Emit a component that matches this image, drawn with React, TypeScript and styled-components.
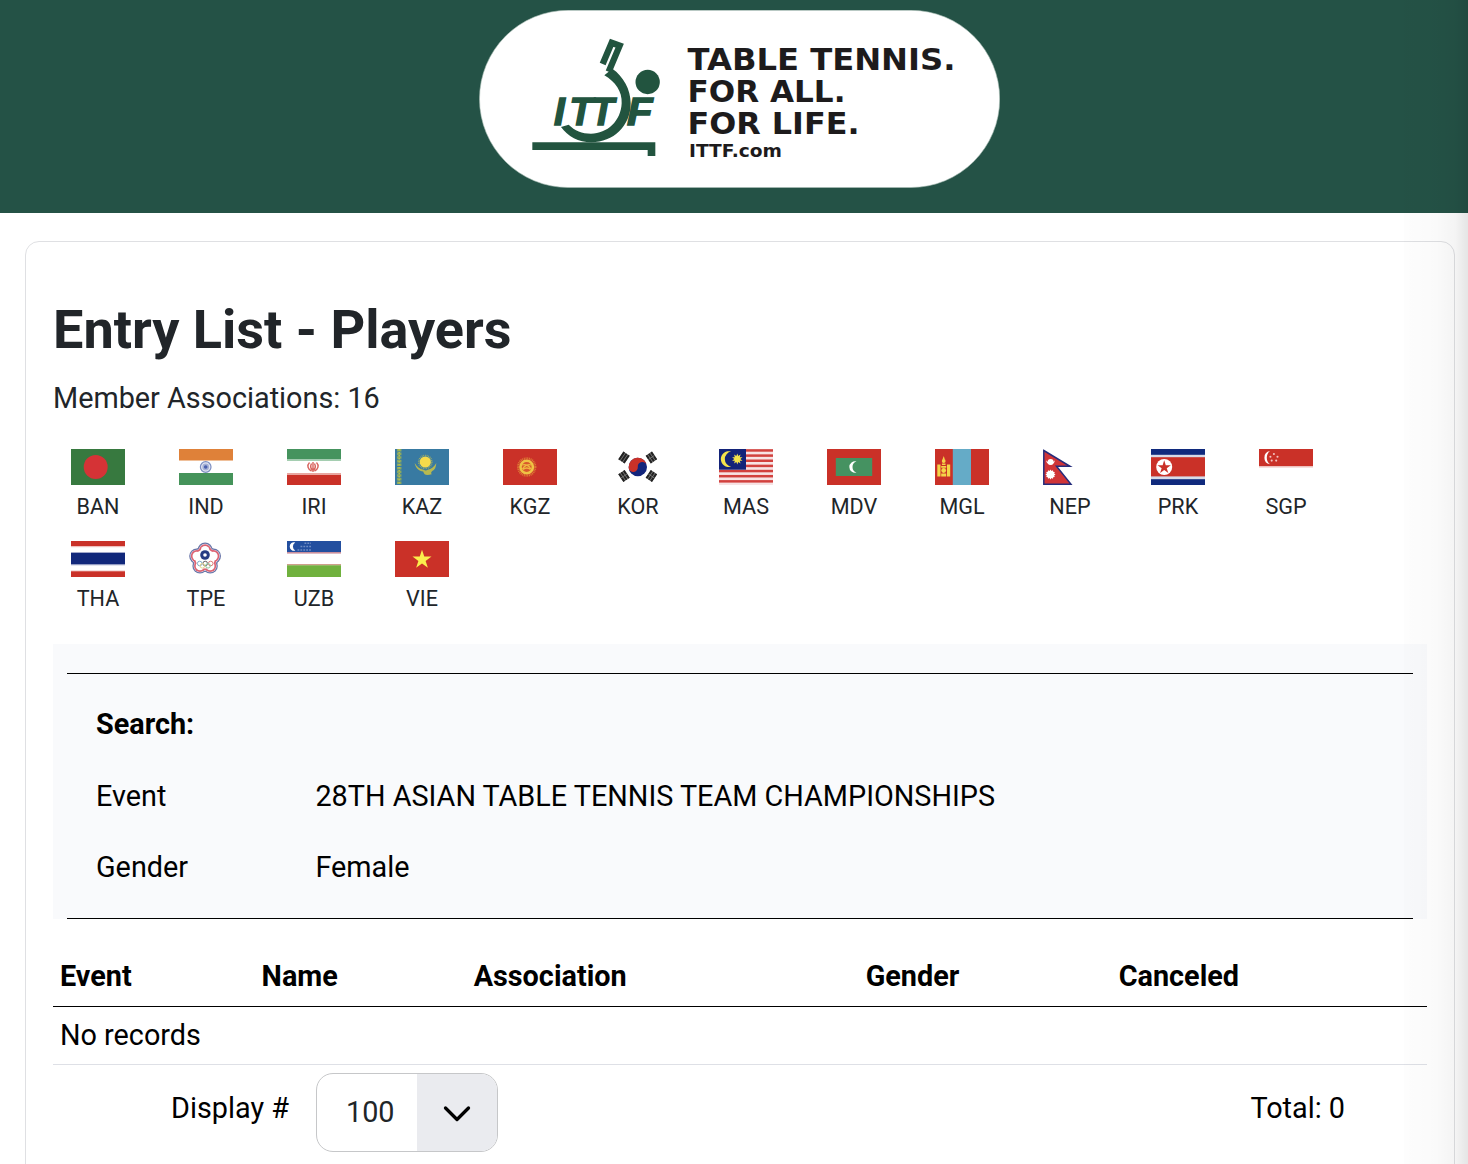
import React from 'react';
import styled, { createGlobalStyle } from 'styled-components';

const star = (cx: number, cy: number, r: number, points = 5, inner = 0.382) =>
  Array.from({ length: points * 2 }, (_, i) => {
    const radius = i % 2 === 0 ? r : r * inner;
    const angle = (Math.PI * i) / points - Math.PI / 2;
    return `${(cx + radius * Math.cos(angle)).toFixed(2)},${(cy + radius * Math.sin(angle)).toFixed(2)}`;
  }).join(' ');

const trigrams = [
  { x: 13, y: 8.5, r: -56 },
  { x: 40.4, y: 8.5, r: 56 },
  { x: 13, y: 27, r: 56 },
  { x: 40.4, y: 27, r: -56 },
];

const petals = [
  [26.1, 9.2],
  [17.8, 15.1],
  [34.4, 15.1],
  [21, 24.9],
  [31.2, 24.9],
];

const flags: { code: string; art: React.ReactNode }[] = [
  {
    code: 'BAN',
    art: (
      <>
        <rect width="54" height="36" fill="#37793f" />
        <circle cx="24.7" cy="18" r="12" fill="#d53336" />
      </>
    ),
  },
  {
    code: 'IND',
    art: (
      <>
        <rect width="54" height="36" fill="#fff" />
        <rect width="54" height="11.5" fill="#df8139" />
        <rect y="24" width="54" height="12" fill="#45935a" />
        <circle cx="26.7" cy="18" r="5.3" fill="#e3e6f2" stroke="#7d8fc2" strokeWidth="1.2" />
        <circle cx="26.7" cy="18" r="3.4" fill="#a5b1d6" />
        <circle cx="26.7" cy="18" r="1.8" fill="#4a5fae" />
      </>
    ),
  },
  {
    code: 'IRI',
    art: (
      <>
        <rect width="54" height="36" fill="#fff" />
        <rect width="54" height="10.5" fill="#45935e" />
        <rect y="10.5" width="54" height="1.5" fill="#a5ceb1" />
        <rect y="24" width="54" height="2" fill="#e9a6a0" />
        <rect y="26" width="54" height="10" fill="#ca3128" />
        <path
          d="M22.5 13.5c-3 3-1.5 7 2 8.5M29.5 13.5c3 3 1.5 7-2 8.5M24.5 14.5c-1.5 3-.5 5.5 1.5 7M27.5 14.5c1.5 3 .5 5.5-1.5 7M26 13v10"
          fill="none"
          stroke="#d8645e"
          strokeWidth="1.4"
        />
      </>
    ),
  },
  {
    code: 'KAZ',
    art: (
      <>
        <rect width="54" height="36" fill="#387aa2" />
        <path d="M4.2 0v36" stroke="#8ba95f" strokeWidth="4.5" strokeDasharray="2.6 1" />
        <path d="M4.2 0v36" stroke="#b6be4c" strokeWidth="1.6" strokeDasharray="1.5 1.5" />
        <circle cx="30.3" cy="13" r="6.6" fill="none" stroke="#a4b25f" strokeWidth="1.5" strokeDasharray=".8 .9" />
        <circle cx="30.3" cy="13" r="5.6" fill="#f6db4b" />
        <path
          d="M19.7 14c.5 5 4.5 8 8.5 8.5 1 4 4 4 9 2.500-2-.5-1-1.500 0-3 2.500-1 4-4 4.100-8-2 3.500-5 6.300-8.600 6.800-1.500 1-2.500 1-4 0-4-.5-7-3.300-9-6.800z"
          fill="#b8b94f"
        />
      </>
    ),
  },
  {
    code: 'KGZ',
    art: (
      <>
        <rect width="54" height="36" fill="#ca3128" />
        <circle cx="23.7" cy="18" r="8.6" fill="none" stroke="#dd7b35" strokeWidth="2.2" strokeDasharray="1 .7" />
        <circle cx="23.7" cy="18" r="6.2" fill="#d9582c" stroke="#efc244" strokeWidth="2.6" />
        <path
          d="M19 16c3-1.200 7 0 9 4M28.500 16c-3-1.200-7 0-9 4M20 20.500c2.500-2 5-2 7.500 0"
          fill="none"
          stroke="#efb840"
          strokeWidth="1.3"
        />
      </>
    ),
  },
  {
    code: 'KOR',
    art: (
      <>
        <rect width="54" height="36" fill="#fff" />
        <circle cx="26.8" cy="18" r="9.2" fill="#13257c" />
        <path
          d="M17.6 18a9.2 9.2 0 0 1 18.4 0a4.6 4.6 0 0 0-9.2 0a4.6 4.6 0 0 1-9.2 0z"
          fill="#ca3128"
          transform="rotate(-6 26.8 18)"
        />
        {trigrams.map(({ x, y, r }, i) => (
          <g key={i} transform={`translate(${x} ${y}) rotate(${r})`}>
            <rect x="-4.6" y="-3.8" width="9.2" height="7.6" fill="#777" />
            <path d="M-4.6-2.800h9.200M-4.600 0h9.200M-4.600 2.800h9.200" stroke="#222" strokeWidth="2" />
            {i > 0 && <path d="M0-3.800v7.600" stroke="#888" strokeWidth=".7" />}
          </g>
        ))}
      </>
    ),
  },
  {
    code: 'MAS',
    art: (
      <>
        <rect width="54" height="36" fill="#f7e3e4" />
        {[0, 1, 2, 3, 4, 5, 6].map((i) => (
          <rect key={i} y={i * 5.15 + 0.2} width="54" height="2.5" fill="#d2413e" />
        ))}
        <rect width="27" height="20.7" fill="#132379" />
        <path d="M12.2 2.600a7.900 7.900 0 1 0 0 15a7.600 7.600 0 0 1 0-15z" fill="#f5e34b" />
        <polygon points={star(18.3, 10, 5.5, 10, 0.55)} fill="#f5e34b" />
      </>
    ),
  },
  {
    code: 'MDV',
    art: (
      <>
        <rect width="54" height="36" fill="#ca3128" />
        <rect x="8.8" y="9" width="36.4" height="18" fill="#459261" />
        <path d="M29.5 12.300a5.850 5.850 0 1 0 0 11.400a6.060 6.060 0 0 1 0-11.400z" fill="#fff" />
      </>
    ),
  },
  {
    code: 'MGL',
    art: (
      <>
        <rect width="54" height="36" fill="#ca3128" />
        <rect x="17.8" width="18.2" height="36" fill="#65abc7" />
        <path
          d="M2.3 15.500h3.200v12H2.300zM12 15.500h3.200v12H12zM6.200 17h5v1.700h-5zM6.200 24.500h5v3h-5zM7 14.500h3.500v1.500H7z"
          fill="#f4d548"
        />
        <circle cx="8.7" cy="21.5" r="2.4" fill="#f4d548" />
        <circle cx="8.7" cy="12" r="1.9" fill="#f4d548" />
        <path d="M8.7 7l1.200 3.500H7.500z" fill="#f4d548" />
      </>
    ),
  },
  {
    code: 'NEP',
    art: (
      <>
        <path d="M.8 1.5L27 17.3H13.5L28 35.3H.8z" fill="#d03437" stroke="#252c7c" strokeWidth="1.5" />
        <path d="M3.2 11.2a4.3 4.3 0 0 0 8.6 0a5 5 0 0 1-8.6 0z" fill="#fff" />
        <circle cx="7.6" cy="13" r="3" fill="#fff" />
        <polygon points={star(7.5, 25.5, 5, 12, 0.75)} fill="#fff" />
      </>
    ),
  },
  {
    code: 'PRK',
    art: (
      <>
        <rect width="54" height="36" fill="#102a7d" />
        <rect y="5.8" width="54" height="24.4" fill="#d6dbe8" />
        <rect y="8.2" width="54" height="19.2" fill="#ca3128" />
        <circle cx="13.2" cy="18" r="8" fill="#fff" />
        <polygon points={star(13.2, 18.3, 7)} fill="#ca3128" />
      </>
    ),
  },
  {
    code: 'SGP',
    art: (
      <>
        <rect width="54" height="36" fill="#fff" />
        <rect width="54" height="17.3" fill="#ca3128" />
        <rect y="17.3" width="54" height="1.2" fill="#eec0bd" />
        <path d="M11 2a6.75 6.75 0 0 0 0 13.300a8.500 8.500 0 0 1 0-13.300z" fill="#fff" />
        {[
          [14.9, 5],
          [11.4, 7.8],
          [18.5, 7.8],
          [12.7, 11.6],
          [17.2, 11.6],
        ].map(([x, y]) => (
          <circle key={`${x}-${y}`} cx={x} cy={y} r="1.05" fill="#f3c4c1" />
        ))}
      </>
    ),
  },
  {
    code: 'THA',
    art: (
      <>
        <rect width="54" height="36" fill="#fff" />
        <rect width="54" height="5.3" fill="#ca3128" />
        <rect y="5.3" width="54" height=".9" fill="#efc0be" />
        <rect y="11" width="54" height="1.3" fill="#a2a9cb" />
        <rect y="12" width="54" height="11.6" fill="#11287b" />
        <rect y="23.3" width="54" height="1" fill="#a2a9cb" />
        <rect y="29.5" width="54" height="1" fill="#efc0be" />
        <rect y="30.3" width="54" height="5.7" fill="#ca3128" />
      </>
    ),
  },
  {
    code: 'TPE',
    art: (
      <>
        <rect width="54" height="36" fill="#fff" />
        {[
          { fill: '#6875a8', grow: 0 },
          { fill: '#e9edf5', grow: 1.2 },
          { fill: '#dd6373', grow: 1.6 },
          { fill: '#fff', grow: 3.3 },
        ].map(({ fill, grow }) => (
          <g key={fill} fill={fill}>
            {petals.map(([x, y]) => (
              <circle key={`${x}-${y}`} cx={x} cy={y} r={7.6 - grow} />
            ))}
            <circle cx="26.1" cy="17.7" r={13 - grow} />
          </g>
        ))}
        <circle cx="26" cy="14" r="4.8" fill="#263c83" />
        <circle cx="26" cy="14" r="1.8" fill="#fff" />
        <g fill="none" strokeWidth="1">
          <circle cx="20.7" cy="22.5" r="2.3" stroke="#7fb0cd" />
          <circle cx="26.2" cy="22.5" r="2.3" stroke="#666" />
          <circle cx="31.7" cy="22.5" r="2.3" stroke="#dc7c79" />
          <circle cx="23.4" cy="24.8" r="2.3" stroke="#e8d38c" />
          <circle cx="29" cy="24.8" r="2.3" stroke="#8fc59a" />
        </g>
      </>
    ),
  },
  {
    code: 'UZB',
    art: (
      <>
        <rect width="54" height="36" fill="#fff" />
        <rect width="54" height="11" fill="#234f9f" />
        <rect y="11" width="54" height="1.6" fill="#c98f9c" />
        <rect y="23" width="54" height="1.5" fill="#cf9f8c" />
        <rect y="24.3" width="54" height="11.7" fill="#70b13e" />
        <path d="M8.3 1.4a4.3 4.3 0 1 0 0 8.200a4.700 4.700 0 0 1 0-8.200z" fill="#fff" />
        <path d="M17.5 2.200H24M13.500 5.500H24M10.500 9H24" stroke="#6f8cc3" strokeWidth="1.4" strokeDasharray="1.8 1.1" />
      </>
    ),
  },
  {
    code: 'VIE',
    art: (
      <>
        <rect width="54" height="36" fill="#ca3128" />
        <polygon points={star(27, 18.7, 10)} fill="#fbee4d" />
      </>
    ),
  },
];

const columns = ['Event', 'Name', 'Association', 'Gender', 'Canceled'];

const Logo = () => (
  <LogoSvg viewBox="0 0 521 178" role="img" aria-label="ITTF">
    <rect x="0.5" y="0.3" width="520.2" height="177.2" rx="88.6" fill="#fff" stroke="#a9bdb6" strokeWidth=".6" />
    <g transform="translate(-9 -10) scale(.33333)" fill="#22543f">
      <path d="M187 427H556V468H533V450H187z" />
      <circle cx="533" cy="246" r="36.5" />
      <path d="M398 192L425 128L449 137L416 215" fill="none" stroke="#22543f" strokeWidth="19" />
      <path d="M403 226L427 206C460 229 482 268 482 310C482 378 430 427 364 427C326 427 293 409 273 381L296 374C314 392 336 401 363 401C412 401 453 363 455 310C457 275 436 245 403 226z" />
    </g>
    <LogoMark>
      <text x="75" y="114.7">I</text>
      <text x="90.5" y="114.7" textLength="23" lengthAdjust="spacingAndGlyphs">T</text>
      <text x="112" y="114.7" textLength="23" lengthAdjust="spacingAndGlyphs">T</text>
      <text x="148" y="114.7" textLength="25.5" lengthAdjust="spacingAndGlyphs">F</text>
    </LogoMark>
    <LogoSlogan>
      <text x="208.5" y="60" textLength="268" lengthAdjust="spacingAndGlyphs">TABLE TENNIS.</text>
      <text x="208.5" y="92" textLength="158" lengthAdjust="spacingAndGlyphs">FOR ALL.</text>
      <text x="208.5" y="124.3" textLength="172" lengthAdjust="spacingAndGlyphs">FOR LIFE.</text>
    </LogoSlogan>
    <LogoDomain x="210" y="147" textLength="93" lengthAdjust="spacingAndGlyphs">
      ITTF.com
    </LogoDomain>
  </LogoSvg>
);

const App = () => (
  <>
    <GlobalStyle />
    <Page>
      <Header>
        <Logo />
      </Header>
      <Card>
        <Title>Entry List - Players</Title>
        <Summary>Member Associations: {flags.length}</Summary>
        <FlagGrid>
          {flags.map(({ code, art }) => (
            <FlagItem key={code}>
              <FlagSvg viewBox="0 0 54 36">{art}</FlagSvg>
              {code}
            </FlagItem>
          ))}
        </FlagGrid>
        <SearchPanel>
          <SearchBody>
            <SearchTitle>Search:</SearchTitle>
            <SearchRow>
              <span>Event</span>
              <span>28TH ASIAN TABLE TENNIS TEAM CHAMPIONSHIPS</span>
            </SearchRow>
            <SearchRow>
              <span>Gender</span>
              <span>Female</span>
            </SearchRow>
          </SearchBody>
        </SearchPanel>
        <TableHead>
          {columns.map((column) => (
            <span key={column}>{column}</span>
          ))}
        </TableHead>
        <EmptyRow>No records</EmptyRow>
        <Footer>
          <DisplayLabel>Display #</DisplayLabel>
          <Select type="button">
            <SelectValue>100</SelectValue>
            <SelectArrow>
              <svg width="30" height="20" viewBox="0 0 30 20" fill="none" stroke="#000">
                <path d="M3.5 5L15 16.5L26.5 5" strokeWidth="3.3" strokeLinecap="round" strokeLinejoin="round" />
              </svg>
            </SelectArrow>
          </Select>
          <Total>Total: 0</Total>
        </Footer>
      </Card>
      <EdgeShade />
    </Page>
  </>
);

export default App;

const GlobalStyle = createGlobalStyle`
  * {
    box-sizing: border-box;
  }

  body {
    margin: 0;
    background: #fff;
    color: #000;
    font: 400 28.8px / 43px Roboto, 'Liberation Sans', sans-serif;
  }
`;

const Page = styled.div`
  position: relative;
  height: 1164px;
  overflow: hidden;
`;

const Header = styled.header`
  display: flex;
  justify-content: center;
  height: 213px;
  padding: 10px 0 0 11px;
  background: #245246;
`;

const LogoSvg = styled.svg`
  width: 521px;
  height: 178px;
`;

const LogoMark = styled.g`
  fill: #22543f;
  stroke: #22543f;
  stroke-width: 1.5px;
  font: italic 700 39px 'Liberation Sans', sans-serif;
`;

const LogoSlogan = styled.g`
  fill: #1d1b1c;
  font: 700 31px 'DejaVu Sans', sans-serif;
`;

const LogoDomain = styled.text`
  fill: #1d1b1c;
  font: 700 17.5px 'DejaVu Sans', sans-serif;
`;

const Card = styled.main`
  height: 1000px;
  margin: 28px 13px 0 25px;
  padding: 55px 27px 0;
  border: 1px solid #dfe0e3;
  border-radius: 14px;
`;

const Title = styled.h1`
  margin: 0;
  color: #212529;
  font-size: 54px;
  font-weight: 700;
  line-height: 66px;
`;

const Summary = styled.p`
  margin: 14px 0 29px;
  color: #212529;
`;

const FlagGrid = styled.div`
  display: grid;
  grid-template-columns: repeat(12, 108px);
  grid-auto-rows: 92px;
  margin: 0 0 11px -9px;
`;

const FlagItem = styled.div`
  display: flex;
  flex-direction: column;
  align-items: center;
  color: #212529;
  font-size: 21.6px;
  line-height: 44px;
`;

const FlagSvg = styled.svg`
  flex: none;
  width: 54px;
  height: 36px;
`;

const SearchPanel = styled.section`
  height: 275px;
  padding: 29px 14px 0;
  background: #f9fafc;
`;

const SearchBody = styled.div`
  height: 246px;
  padding: 15px 29px 0;
  border-top: 1px solid #000;
  border-bottom: 1px solid #000;
`;

const SearchTitle = styled.div`
  padding-bottom: 2px;
  font-weight: 700;
  line-height: 70px;
`;

const SearchRow = styled.div`
  display: grid;
  grid-template-columns: 219.4px 1fr;
  line-height: 71px;
`;

const TableHead = styled.div`
  display: grid;
  grid-template-columns: 201.6px 212.1px 392px 253px 1fr;
  height: 88px;
  padding: 36px 7px 0;
  border-bottom: 1px solid #000;
  font-weight: 700;
`;

const EmptyRow = styled.div`
  height: 58px;
  padding: 7px 7px 0;
  border-bottom: 1px solid #dee0e6;
`;

const Footer = styled.div`
  display: flex;
  align-items: flex-start;
  padding: 8px 82px 0 118px;
`;

const DisplayLabel = styled.span`
  width: 145px;
  padding-top: 14px;
`;

const Select = styled.button`
  display: flex;
  width: 182px;
  height: 79px;
  padding: 0;
  overflow: hidden;
  border: 1px solid #c6c7c9;
  border-radius: 17px;
  background: #fff;
  color: #212529;
  font: inherit;
`;

const SelectValue = styled.span`
  width: 100px;
  padding: 0 0 0 29px;
  line-height: 77px;
  text-align: left;
`;

const SelectArrow = styled.span`
  display: flex;
  flex: 1;
  align-items: center;
  justify-content: center;
  height: 77px;
  background: #eaebef;
`;

const Total = styled.span`
  margin-left: auto;
  padding-top: 14px;
`;

const EdgeShade = styled.div`
  position: absolute;
  top: 0;
  right: 0;
  bottom: 0;
  width: 64px;
  background: linear-gradient(
    to right,
    rgba(0, 0, 0, 0.006),
    rgba(0, 0, 0, 0.018) 50%,
    rgba(0, 0, 0, 0.045) 80%,
    rgba(0, 0, 0, 0.1)
  );
  pointer-events: none;
`;
